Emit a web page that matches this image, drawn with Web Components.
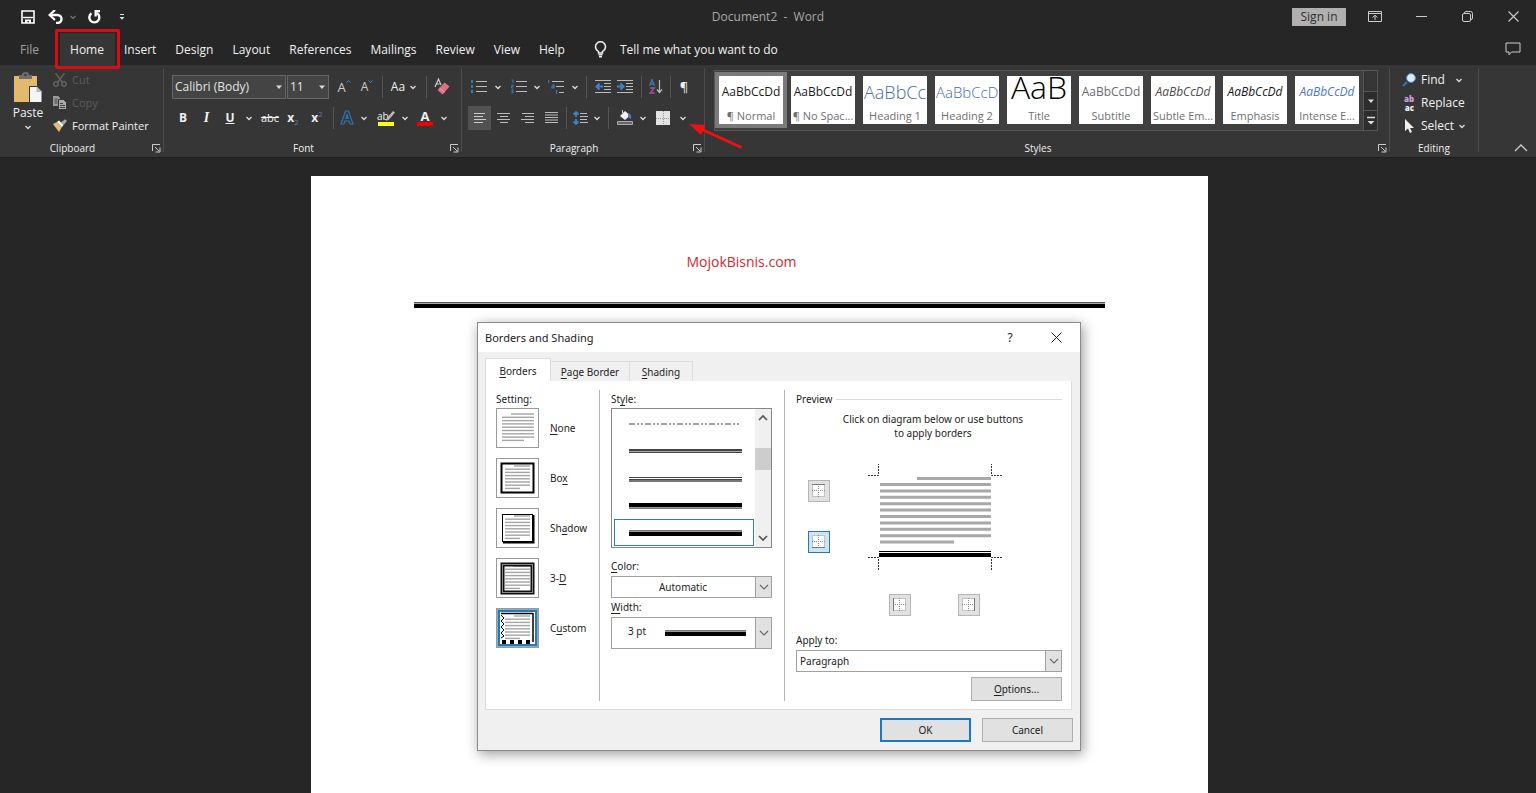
<!DOCTYPE html>
<html lang="en">
<head>
<meta charset="utf-8">
<title>Document2 - Word</title>
<style>
    html, body {
        height: 100%;
    }
    body {
        margin: 0;
        overflow: hidden;
        background: #262626;
        color: #f0f0f0;
        font-family: "Open Sans", "Noto Sans", sans-serif;
        font-size: 12px;
    }
</style>
</head>
<body>
<word-app>
    <title-bar></title-bar>
    <ribbon-tabs></ribbon-tabs>
    <ribbon-bar></ribbon-bar>
    <doc-page></doc-page>
    <borders-dialog></borders-dialog>
    <red-arrow></red-arrow>
</word-app>

<script>
const CHEVRON = '<path d="M1.5 3 4 5.5 6.5 3" fill="none" stroke="#ddd" stroke-width="1.3"/>';

// name: [width, height, markup]
const icons = {
    chevron: [8, 8, CHEVRON],
    dimchevron: [8, 8, '<path d="M1.5 3 4 5.5 6.5 3" fill="none" stroke="#777" stroke-width="1.2"/>'],
    triangle: [8, 8, '<path d="M1 2.5h6L4 6z" fill="#ddd"/>'],
    save: [14, 14, '<path d="M1 1h12v12H1z" fill="none" stroke="#fff" stroke-width="1.6"/><path d="M2 7.5h10" stroke="#fff" stroke-width="1.4"/><path d="M4 13V9.5h6V13H8v-2H6.500v2z" fill="#fff"/>'],
    undo: [16, 14, '<path d="M2.500 5h7a4 4 0 0 1 0 8H8" fill="none" stroke="#fff" stroke-width="2.400"/><path d="M7 0 1.500 5 7 10" fill="none" stroke="#fff" stroke-width="2.200"/>'],
    redo: [14, 14, '<path d="M4.500 3.200A5 5 0 1 0 9.800 3" fill="none" stroke="#fff" stroke-width="2.400"/><path d="M7.500 0H13v2.200H9.800V6.500H7.500z" fill="#fff"/>'],
    custom: [6, 8, '<path d="M1 1.500h4" stroke="#ddd"/><path d="M.5 4h5L3 6.800z" fill="#ddd"/>'],
    more: [10, 10, '<path d="M1 1.500h8" stroke="#ddd" stroke-width="1.500"/><path d="M1.500 5h7L5 8.500z" fill="#ddd"/>'],
    display: [14, 11, '<path d="M.5.5h13v10H.5zM.5 2.500h13" fill="none" stroke="#ccc"/><path d="M7 9V4.500M4.500 6.500 7 4.300l2.500 2.200" fill="none" stroke="#ccc"/>'],
    minimise: [11, 10, '<path d="M0 4.500h11" stroke="#ccc"/>'],
    restore: [11, 11, '<rect x=".5" y="2.500" width="8" height="8" rx="1.500" fill="none" stroke="#ccc"/><path d="M2.500 2.500v-.5Q2.500.5 4 .5h4.500q2 0 2 2V7q0 1.500-1.500 1.500" fill="none" stroke="#ccc"/>'],
    close: [11, 11, '<path d="m.5.5 10 10m0-10-10 10" stroke="#ccc" stroke-width="1.100"/>'],
    comment: [16, 14, '<path d="M1 1h14v9H6.500L4 12.800V10H1z" fill="none" stroke="#ccc"/>'],
    bulb: [13, 17, '<path d="M4.500 12V10.500Q1.500 8.500 1.500 5.700a5 5 0 0 1 10 0Q11.500 8.500 8.500 10.500V12z" fill="none" stroke="#eee" stroke-width="1.500"/><path d="M4.500 13.800h4M5 15.800h3" stroke="#eee" stroke-width="1.400"/>'],
    paste: [30, 31, '<path d="M1 4h23v26H1z" fill="#e3b96d"/><path d="M6 3h3q0-3 3.500-3T16 3h3v4H6z" fill="#6e6e6e"/><circle cx="12.500" cy="3" r="1.200" fill="#363636"/><path d="M16.500 14.500h7.500l5 5v11H16.500z" fill="#f5f5f5" stroke="#363636"/><path d="M23.500 14.500V20H29z" fill="#bbb"/>'],
    cut: [14, 14, '<g fill="none" stroke="#606060" stroke-width="1.500"><circle cx="3" cy="11" r="2.200"/><circle cx="11" cy="11" r="2.200"/><path d="M2.500 0 9.500 9.500M11.500 0 4.500 9.500"/></g>'],
    copy: [14, 14, '<path d="M0 0h5l2 2v8H0z" fill="#9b9b9b"/><path d="M5.500 3.500h5l3 3v7h-8z" fill="#aaa" stroke="#363636"/><path d="M1.500 3h3m-3 2h3m-3 2h3M7 7.500h3M7 9.500h5M7 11.500h5" stroke="#444"/>'],
    brush: [14, 13, '<path d="M0 5 4 3l5 5-3 5Q3 9 0 5z" fill="#e8b878"/><path d="m4 3 2-1.500L10.500 6 9 8z" fill="#fff"/><path d="m8 3.500 4-3.300L14 2l-3.500 4z" fill="#aaa"/>'],
    launcher: [9, 9, '<path d="M.5 7V.5H8" fill="none" stroke="#ccc"/><path d="m3 3 4 4M8 3.500v4.500H3.500" fill="none" stroke="#ccc"/>'],
    eraser: [16, 17, '<path d="m1 9 3.500-8L7 7M2.500 6h3" fill="none" stroke="#ccc" stroke-width="1.200"/><path d="m3.500 12 7-7.500 5 4-7 8z" fill="#e0707f"/><path d="m5.500 10 5 4.500" stroke="#f5a3ad"/>'],
    outlineA: [14, 15, '<path d="M1 14 5.500 1h3L13 14h-3l-1-3H5l-1 3zM5.800 8.500h2.400L7 4.500z" fill="none" stroke="#3273b5" stroke-width="1.200"/>'],
    pen: [9, 11, '<path d="M0 11 1 8 7 1l2 1.500L3 9.500z" fill="#bbb"/>'],
    bullets: [16, 14, '<path d="M5 1.500h11M5 6.500h11M5 11.500h11" stroke="#bbb"/><path d="M0 0h2v3H0zM0 5h2v3H0zM0 10h2v3H0z" fill="#3b78b8"/>'],
    numbers: [16, 15, '<path d="M5 2.500h11M5 7.500h11M5 12.500h11" stroke="#bbb"/><path d="M.5 1H2v3M.3 6H2v1.500H.5V9H2.300M.3 11H2v3H.3M.5 12.500H2" fill="none" stroke="#3b78b8"/>'],
    multi: [16, 14, '<path d="M4 1.500h12M8 6.500h8M11 12.500h5" stroke="#bbb"/><path d="M.5 0v3M4 5h2v3H4V6.500h2M8.500 10v4" fill="none" stroke="#3b78b8" stroke-width="1.200"/>'],
    outdent: [16, 13, '<path d="M0 .5h16M9 3.500h7M9 6.500h7M9 9.500h7M0 12.500h16" stroke="#bbb"/><path d="M8 6.500H2M4.500 3.500l-3 3 3 3" fill="none" stroke="#3b84cc" stroke-width="2"/>'],
    indent: [16, 13, '<path d="M0 .5h16M9 3.500h7M9 6.500h7M9 9.500h7M0 12.500h16" stroke="#bbb"/><path d="M0 6.500h6M3.500 3.500l3 3-3 3" fill="none" stroke="#3b84cc" stroke-width="2"/>'],
    sort: [14, 15, '<path d="m.5 7 2.500-6.500L5.500 7M1.500 5h3" fill="none" stroke="#3b78b8" stroke-width="1.300"/><path d="M1 9h4.300L1 14h4.600" fill="none" stroke="#9a55a0" stroke-width="1.300"/><path d="M10.500 1v12M8 10.500l2.500 3 2.500-3" fill="none" stroke="#bbb" stroke-width="1.200"/>'],
    left: [12, 10, '<path d="M0 .5h11M0 3.500h9M0 6.500h12M0 9.500h9" stroke="#ccc"/>'],
    center: [13, 10, '<path d="M0 .5h13M3 3.500h8M0 6.500h13M3 9.500h8" stroke="#bbb"/>'],
    right: [13, 10, '<path d="M1 .5h12M4 3.500h9M0 6.500h13M4 9.500h9" stroke="#bbb"/>'],
    justify: [13, 11, '<path d="M0 .5h13M0 3h13M0 5.500h13M0 8h13M0 10.500h13" stroke="#bbb"/>'],
    spacing: [15, 14, '<path d="M7 2.500h7M7 5.500h8M7 8.500h7M7 11.500h8" stroke="#bbb"/><path d="M3 1v5M3 8v5M.5 3.500 3 1l2.500 2.500M.5 10.500 3 13l2.500-2.500" fill="none" stroke="#3b84cc" stroke-width="1.800"/>'],
    shade: [17, 15, '<path d="m3 6 5-5 5 4.500L8 10z" fill="#f2f2f2"/><path d="M11 3q4 1 3 6l-3-2z" fill="#3b84cc"/><path d="M5.500 3V0" stroke="#ccc"/><path d="M.5 11.500h15v3H.5z" fill="#666" stroke="#aaa"/>'],
    borders: [14, 14, '<path d="M0 0h14v14H0z" fill="#e3e3e3"/><path d="M7.500 0v14M0 7.500h14" stroke="#999" stroke-dasharray="1 1"/>'],
    find: [15, 14, '<path d="m1 13 4-4" stroke="#2f6fae" stroke-width="2.400"/><circle cx="9" cy="5" r="4.400" fill="#d8ebfb" stroke="#4a90d0"/>'],
    select: [10, 14, '<path d="M1 0v12l3-2.500L6 14l2-1-2-4h4z" fill="#f0f0f0"/>'],
    collapse: [14, 8, '<path d="m1 7 6-6 6 6" fill="none" stroke="#ccc" stroke-width="1.300"/>'],
    down: [10, 10, '<path d="m1 3 4 4 4-4" fill="none" stroke="#666" stroke-width="1.100"/>'],
    scrollup: [10, 8, '<path d="m1 6 4-4 4 4" fill="none" stroke="#555" stroke-width="1.700"/>'],
    scrolldown: [10, 8, '<path d="m1 2 4 4 4-4" fill="none" stroke="#555" stroke-width="1.700"/>'],
    darkclose: [11, 11, '<path d="m.5.5 10 10m0-10-10 10" stroke="#222"/>']
};

class WordIcon extends HTMLElement {
    constructor() {
        super();
        this.attachShadow({mode: "open"});
    }
    connectedCallback() {
        const [w, h, body] = icons[this.getAttribute("name")];
        this.shadowRoot.innerHTML = `
        <style>
            :host { display: inline-flex; flex: none; }
            svg { display: block; }
        </style>
        <svg width="${w}" height="${h}" viewBox="0 0 ${w} ${h}" aria-hidden="true">${body}</svg>
        `;
    }
}

class WordApp extends HTMLElement {
    constructor() {
        super();
        this.attachShadow({mode: "open"});
        this.shadowRoot.innerHTML = `
        <style>
            :host {
                position: relative;
                display: flex;
                flex-direction: column;
                height: 100vh;
                overflow: hidden;
            }
        </style>
        <slot></slot>
        `;
    }
}

class TitleBar extends HTMLElement {
    constructor() {
        super();
        this.attachShadow({mode: "open"});
        this.shadowRoot.innerHTML = `
        <style>
            :host {
                display: grid;
                grid-template-columns: 1fr auto 1fr;
                align-items: center;
                height: 33px;
                flex: none;
                color: #a8a8a8;
            }
            button {
                display: flex;
                align-items: center;
                justify-content: center;
                height: 32px;
                padding: 0;
                border: 0;
                background: none;
                font: inherit;
            }
            .quick, .window {
                display: flex;
                align-items: center;
            }
            .quick {
                padding-left: 12px;
            }
            .quick button { width: 32px; }
            .quick .narrow { width: 10px; }
            .quick .last { width: 24px; }
            .window { justify-content: flex-end; }
            .window button { width: 46px; }
            .window .sign {
                width: 54px;
                height: 18px;
                margin-right: 6px;
                background: #b0b0b0;
                color: #303030;
            }
        </style>
        <div class="quick">
            <button aria-label="Save"><word-icon name="save"></word-icon></button>
            <button class="last" aria-label="Undo"><word-icon name="undo"></word-icon></button>
            <button class="narrow" aria-label="Undo list"><word-icon name="dimchevron"></word-icon></button>
            <button aria-label="Repeat"><word-icon name="redo"></word-icon></button>
            <button class="last" aria-label="Customize"><word-icon name="custom"></word-icon></button>
        </div>
        <span>Document2&nbsp; -&nbsp; Word</span>
        <div class="window">
            <button class="sign">Sign in</button>
            <button aria-label="Ribbon display"><word-icon name="display"></word-icon></button>
            <button aria-label="Minimize"><word-icon name="minimise"></word-icon></button>
            <button aria-label="Restore"><word-icon name="restore"></word-icon></button>
            <button aria-label="Close"><word-icon name="close"></word-icon></button>
        </div>
        `;
    }
}

class RibbonTabs extends HTMLElement {
    constructor() {
        super();
        this.attachShadow({mode: "open"});
        const tabs = ["Insert", "Design", "Layout", "References", "Mailings", "Review", "View", "Help"];
        this.shadowRoot.innerHTML = `
        <style>
            :host {
                display: flex;
                align-items: stretch;
                height: 32px;
                flex: none;
            }
            button {
                padding: 0 10px 0 9px;
                border: 0;
                background: none;
                color: inherit;
                font: inherit;
            }
            .file {
                width: 60px;
                color: #a0a0a0;
            }
            .home {
                position: relative;
                width: 55px;
                background: #363636;
            }
            /* marker drawn over the active tab */
            .home::after {
                content: "";
                position: absolute;
                inset: -4px -5px;
                border: 3px solid #dc0d12;
                border-radius: 2px;
            }
            .tell {
                display: flex;
                align-items: center;
                gap: 13px;
                padding-left: 19px;
            }
            .comment {
                display: flex;
                align-items: center;
                margin-left: auto;
                padding: 0 15px 0 0;
            }
        </style>
        <button class="file">File</button>
        <button class="home">Home</button>
        ${tabs.map(t => `<button>${t}</button>`).join("")}
        <button class="tell"><word-icon name="bulb"></word-icon>Tell me what you want to do</button>
        <button class="comment" aria-label="Comments"><word-icon name="comment"></word-icon></button>
        `;
    }
}

class RibbonGroup extends HTMLElement {
    constructor() {
        super();
        this.attachShadow({mode: "open"});
    }
    connectedCallback() {
        const launcher = this.hasAttribute("launcher");
        this.shadowRoot.innerHTML = `
        <style>
            :host {
                display: grid;
                grid-template-columns: 1fr 1px;
                flex: none;
            }
            .body {
                display: grid;
                grid-template-rows: 74px 18px;
                min-width: 0;
            }
            .line {
                margin: 3px 0 5px;
                background: #4c4c4c;
            }
            .caption {
                display: flex;
                align-items: center;
                font-size: 10px;
                line-height: 16px;
            }
            .caption span {
                flex: 1;
                text-align: center;
            }
            button {
                width: 18px;
                padding: 0 0 0 5px;
                border: 0;
                background: none;
                line-height: 0;
            }
        </style>
        <div class="body">
            <slot></slot>
            <div class="caption">
                <span>${this.getAttribute("caption")}</span>
                ${launcher ? '<button aria-label="More options"><word-icon name="launcher"></word-icon></button>' : ""}
            </div>
        </div>
        <div class="line"></div>
        `;
    }
}

class StyleGallery extends HTMLElement {
    constructor() {
        super();
        this.attachShadow({mode: "open"});
        const styles = [
            ["AaBbCcDd", "¶ Normal", "on"],
            ["AaBbCcDd", "¶ No Spac...", ""],
            ["AaBbCc", "Heading 1", "h1"],
            ["AaBbCcD", "Heading 2", "h2"],
            ["AaB", "Title", "title"],
            ["AaBbCcDd", "Subtitle", "sub"],
            ["AaBbCcDd", "Subtle Em...", "em soft"],
            ["AaBbCcDd", "Emphasis", "em"],
            ["AaBbCcDd", "Intense E...", "em blue"]
        ];
        this.shadowRoot.innerHTML = `
        <style>
            :host {
                display: flex;
                height: 59px;
                margin: 5px 11px 0 9px;
                border: 1px solid #555;
                background: #404040;
            }
            .tile {
                flex: 1;
                min-width: 0;
                height: 56px;
                margin-top: 1px;
                padding: 4px;
                border: 0;
                background: none;
                font: inherit;
                font-size: 11px;
            }
            .tile.on { background: #7a7a7a; }
            .card {
                display: grid;
                grid-template-rows: 32px 16px;
                background: #fff;
                color: #707070;
                line-height: 16px;
                white-space: nowrap;
                overflow: hidden;
            }
            .sample {
                display: flex;
                align-items: center;
                justify-content: center;
                margin: 0 1px;
                overflow: hidden;
                color: #1a1a1a;
                font-size: 12px;
            }
            .h1 .sample {
                justify-content: flex-start;
                color: #466aa5;
                font-size: 18px;
                font-weight: 300;
            }
            .h2 .sample {
                justify-content: flex-start;
                color: #466aa5;
                font-size: 15px;
                font-weight: 300;
            }
            .title .sample {
                align-items: flex-end;
                padding-bottom: 5px;
                color: #000;
                font-size: 32px;
                font-weight: 300;
                line-height: 32px;
            }
            .sub .sample { color: #6c6c6c; }
            .em .sample { font-style: italic; }
            .soft .sample { color: #4c4c4c; }
            .blue .sample { color: #4a7ac0; }
            .label { text-align: center; }
            .scroll {
                display: grid;
                grid-template-rows: repeat(3, 1fr);
                width: 14px;
            }
            .scroll button {
                display: flex;
                align-items: center;
                justify-content: center;
                padding: 0;
                border: 0;
                border-left: 1px solid #555;
                background: #2d2d2d;
            }
            .scroll button + button { border-top: 1px solid #555; }
            .scroll .off { background: #363636; }
        </style>
        ${styles.map(([sample, label, cls]) => `
        <button class="tile ${cls}">
            <span class="card"><span class="sample">${sample}</span><span class="label">${label}</span></span>
        </button>`).join("")}
        <div class="scroll">
            <button class="off" aria-label="Scroll up"></button>
            <button aria-label="Scroll down"><word-icon name="triangle"></word-icon></button>
            <button aria-label="All styles"><word-icon name="more"></word-icon></button>
        </div>
        `;
    }
}

class RibbonBar extends HTMLElement {
    constructor() {
        super();
        this.attachShadow({mode: "open"});
        this.shadowRoot.innerHTML = `
        <style>
            :host {
                display: flex;
                flex: none;
                background: #363636;
                border-bottom: 1px solid #1e1e1e;
            }
            button {
                display: flex;
                align-items: center;
                justify-content: center;
                padding: 0;
                border: 0;
                background: none;
                color: inherit;
                font: inherit;
                line-height: 16px;
                white-space: nowrap;
            }
            i.sep {
                width: 1px;
                height: 22px;
                justify-self: center;
                background: #555;
            }
            .clipboard { width: 164px; }
            .font { width: 298px; }
            .para { width: 243px; }
            .styles { flex: 1; min-width: 0; }
            .editing { width: 89px; }
            .rest {
                display: flex;
                align-items: flex-end;
                justify-content: flex-end;
                width: 57px;
                padding: 0 8px 5px 0;
                box-sizing: border-box;
            }
            .clip {
                display: flex;
                padding: 3px 0 0 4px;
            }
            .paste {
                flex-direction: column;
                justify-content: flex-start;
                gap: 2px;
                width: 48px;
                padding-top: 4px;
            }
            .stack {
                display: grid;
                grid-auto-rows: 23px;
                justify-items: start;
            }
            .stack button { gap: 4px; }
            .clip .stack button { font-size: 11px; }
            .stack word-icon, .stack .swap {
                width: 16px;
                justify-content: center;
            }
            .stack .drop {
                width: 8px;
            }
            .off { color: #5c5c5c; }
            .find {
                padding: 3px 0 0 11px;
            }
            .find button:first-child .drop { margin-left: 6px; }
            .swap {
                display: grid;
                font-size: 8px;
                font-weight: bold;
                line-height: 9px;
                text-align: left;
            }
            .swap b:first-child { color: #c9a0dc; }
            .swap b:last-child { text-align: right; }
            .tools {
                display: grid;
                grid-template-rows: 31px 31px;
                padding-top: 6px;
            }
            .row {
                display: grid;
                align-items: center;
            }
            .row > button { height: 24px; }
            .font .tools { padding-left: 8px; }
            .para .tools { padding-left: 6px; }
            .f1 { grid-template-columns: 115px 43px 28px 18px 12px 32px 12px 20px; }
            .f2 { grid-template-columns: 22px 25px 22px 16px 26px 20px 28px 4px 23px 12px 30px 10px 30px 8px; }
            .p1 { grid-template-columns: 22px 16px 26px 10px 28px 10px 12px 21px 24px 8px 22px 6px 22px; }
            .p2 { grid-template-columns: 23px 25px 23px 24px 6px 23px 10px 12px 23px 12px 28px 12px; }
            .combo {
                display: grid;
                align-items: center;
                margin-right: 1px;
            }
            .combo > * { grid-area: 1 / 1; }
            .combo word-icon {
                justify-self: end;
                margin-right: 3px;
                pointer-events: none;
            }
            select {
                appearance: none;
                width: 100%;
                height: 24px;
                padding: 0 2px;
                border: 1px solid #666;
                border-radius: 0;
                background: #444;
                color: #e4e4e4;
                font: inherit;
            }
            .size { color: #ccc; }
            .size svg {
                flex: none;
                margin-bottom: 10px;
            }
            .gap { gap: 4px; }
            .big { font-size: 13px; }
            .serif { font-family: "Liberation Serif", serif; font-size: 14px; }
            .strike { text-decoration: line-through; font-size: 11px; }
            sub, sup { color: #3b84cc; font-size: 8px; line-height: 8px; }
            sub { margin-top: 8px; }
            sup { margin-bottom: 8px; }
            .on { background: #525252; }
            .bar {
                display: grid;
                justify-items: center;
                grid-template-rows: 12px 4px;
                width: 16px;
                line-height: 12px;
            }
            .bar::after {
                content: "";
                width: 16px;
                height: 4px;
                background: var(--ink);
            }
            .ab {
                --ink: #ffff00;
                font-size: 10px;
            }
            .ab span {
                display: flex;
            }
            .ab word-icon { margin-left: -3px; }
            .ink { --ink: #f00000; font-size: 13px; }
        </style>

        <ribbon-group class="clipboard" caption="Clipboard" launcher>
            <div class="clip">
                <button class="paste"><word-icon name="paste"></word-icon>Paste<word-icon name="chevron"></word-icon></button>
                <div class="stack">
                    <button class="off" disabled><word-icon name="cut"></word-icon>Cut</button>
                    <button class="off" disabled><word-icon name="copy"></word-icon>Copy</button>
                    <button><word-icon name="brush"></word-icon>Format Painter</button>
                </div>
            </div>
        </ribbon-group>

        <ribbon-group class="font" caption="Font" launcher>
            <div class="tools">
                <div class="row f1">
                    <div class="combo"><select aria-label="Font"><option>Calibri (Body)</option></select><word-icon name="triangle"></word-icon></div>
                    <div class="combo"><select aria-label="Font size"><option>11</option></select><word-icon name="triangle"></word-icon></div>
                    <button class="size big" aria-label="Grow font">A<svg width="5" height="5"><path d="M.5 3.500l2-2 2 2" fill="none" stroke="#3b84cc"/></svg></button>
                    <button class="size" aria-label="Shrink font">A<svg width="5" height="5"><path d="M.5 1.500l2 2 2-2" fill="none" stroke="#3b84cc"/></svg></button>
                    <i class="sep"></i>
                    <button class="gap">Aa<word-icon name="chevron"></word-icon></button>
                    <i class="sep"></i>
                    <button aria-label="Clear formatting"><word-icon name="eraser"></word-icon></button>
                </div>
                <div class="row f2">
                    <button><b>B</b></button>
                    <button class="serif"><b><em>I</em></b></button>
                    <button><b><u>U</u></b></button>
                    <button aria-label="Underline styles"><word-icon name="chevron"></word-icon></button>
                    <button class="strike">abc</button>
                    <button><b>x</b><sub>2</sub></button>
                    <button><b>x</b><sup>2</sup></button>
                    <i class="sep"></i>
                    <button aria-label="Text effects"><word-icon name="outlineA"></word-icon></button>
                    <button aria-label="Effects list"><word-icon name="chevron"></word-icon></button>
                    <button><span class="bar ab"><span>ab<word-icon name="pen"></word-icon></span></span></button>
                    <button aria-label="Highlight list"><word-icon name="chevron"></word-icon></button>
                    <button><span class="bar ink"><b>A</b></span></button>
                    <button aria-label="Colour list"><word-icon name="chevron"></word-icon></button>
                </div>
            </div>
        </ribbon-group>

        <ribbon-group class="para" caption="Paragraph" launcher>
            <div class="tools">
                <div class="row p1">
                    <button aria-label="Bullets"><word-icon name="bullets"></word-icon></button>
                    <button aria-label="Bullet list"><word-icon name="chevron"></word-icon></button>
                    <button aria-label="Numbering"><word-icon name="numbers"></word-icon></button>
                    <button aria-label="Numbering list"><word-icon name="chevron"></word-icon></button>
                    <button aria-label="Multilevel"><word-icon name="multi"></word-icon></button>
                    <button aria-label="Multilevel list"><word-icon name="chevron"></word-icon></button>
                    <i class="sep"></i>
                    <button aria-label="Decrease indent"><word-icon name="outdent"></word-icon></button>
                    <button aria-label="Increase indent"><word-icon name="indent"></word-icon></button>
                    <i class="sep"></i>
                    <button aria-label="Sort"><word-icon name="sort"></word-icon></button>
                    <i class="sep"></i>
                    <button class="big">¶</button>
                </div>
                <div class="row p2">
                    <button class="on" aria-label="Align left"><word-icon name="left"></word-icon></button>
                    <button aria-label="Center"><word-icon name="center"></word-icon></button>
                    <button aria-label="Align right"><word-icon name="right"></word-icon></button>
                    <button aria-label="Justify"><word-icon name="justify"></word-icon></button>
                    <i class="sep"></i>
                    <button aria-label="Line spacing"><word-icon name="spacing"></word-icon></button>
                    <button aria-label="Spacing list"><word-icon name="chevron"></word-icon></button>
                    <i class="sep"></i>
                    <button aria-label="Shading"><word-icon name="shade"></word-icon></button>
                    <button aria-label="Shading list"><word-icon name="chevron"></word-icon></button>
                    <button aria-label="Borders"><word-icon name="borders"></word-icon></button>
                    <button aria-label="Borders list"><word-icon name="chevron"></word-icon></button>
                </div>
            </div>
        </ribbon-group>

        <ribbon-group class="styles" caption="Styles" launcher>
            <style-gallery></style-gallery>
        </ribbon-group>

        <ribbon-group class="editing" caption="Editing">
            <div class="stack find">
                <button><word-icon name="find"></word-icon>Find<word-icon class="drop" name="chevron"></word-icon></button>
                <button><span class="swap"><b>ab</b><b>ac</b></span>Replace</button>
                <button><word-icon name="select"></word-icon>Select<word-icon class="drop" name="chevron"></word-icon></button>
            </div>
        </ribbon-group>
        <div class="rest">
            <button aria-label="Collapse ribbon"><word-icon name="collapse"></word-icon></button>
        </div>
        `;
    }
}

class DocPage extends HTMLElement {
    constructor() {
        super();
        this.attachShadow({mode: "open"});
        this.shadowRoot.innerHTML = `
        <style>
            :host {
                display: flex;
                flex: 1;
                justify-content: center;
                padding: 18px 17px 0 0;
            }
            article {
                box-sizing: border-box;
                width: 59%;
                padding: 74px 103px 0;
                background: #fff;
            }
            p {
                margin: 0;
                padding-right: 36px;
                color: #d02a2c;
                font-size: 14px;
                line-height: 24px;
                text-align: center;
            }
            hr {
                height: 1px;
                margin: 28px 0 0;
                border: 0;
                border-top: 1px solid #555;
                border-bottom: 4px solid #000;
                background: #aaa;
            }
        </style>
        <article>
            <p>MojokBisnis.com</p>
            <hr>
        </article>
        `;
    }
}

// label + select with the dialog's grey drop button
class PickList extends HTMLElement {
    constructor() {
        super();
        this.attachShadow({mode: "open"});
    }
    connectedCallback() {
        this.shadowRoot.innerHTML = `
        <style>
            :host {
                display: block;
                --h: 22px;
            }
            :host([tall]) { --h: 32px; }
            label {
                display: block;
                line-height: 19px;
            }
            .box {
                display: grid;
                align-items: center;
            }
            .box > * { grid-area: 1 / 1; }
            select {
                appearance: none;
                box-sizing: border-box;
                width: 100%;
                height: var(--h);
                padding: 0 20px 0 3px;
                border: 1px solid #a0a0a0;
                border-radius: 0;
                background: #fff;
                color: #222;
                font: inherit;
            }
            :host([center]) select { text-align-last: center; }
            :host([tall]) select { padding: 0 0 4px 16px; }
            .drop {
                display: flex;
                align-items: center;
                justify-content: center;
                justify-self: end;
                box-sizing: border-box;
                width: 17px;
                height: var(--h);
                border: 1px solid #a0a0a0;
                background: #e1e1e1;
                pointer-events: none;
            }
            ::slotted(.line) {
                grid-area: 1 / 1;
                margin: 0 26px 0 54px;
                pointer-events: none;
            }
        </style>
        <label for="pick"><slot name="label"></slot></label>
        <div class="box">
            <select id="pick"><option>${this.getAttribute("value")}</option></select>
            <slot></slot>
            <span class="drop"><word-icon name="down"></word-icon></span>
        </div>
        `;
    }
}

// thumbnail and label of one border setting
class SettingChoice extends HTMLElement {
    constructor() {
        super();
        this.attachShadow({mode: "open"});
    }
    connectedCallback() {
        const kind = this.getAttribute("kind");
        const small = kind !== "none";
        const [x, top, right, rows, step] = small ? [9, 8, 34, 7, 3.2] : [6, 6, 38, 8, 3.3];
        let text = `<path d="M${x + 9} ${top}H${right}" stroke="#a4a4a4" stroke-width="1.4"/>`;
        for (let i = 1; i <= rows; i++) {
            text += `<path d="M${x} ${top + i * step}H${i === rows ? right - 10 : right}" stroke="#a4a4a4" stroke-width="1.4"/>`;
        }
        const frames = {
            none: "",
            box: '<rect x="5.500" y="5.500" width="32" height="29" fill="none" stroke="#000" stroke-width="2"/>',
            shadow: '<rect x="6.500" y="6.500" width="30" height="27" fill="none" stroke="#000"/><path d="M37.500 7v28.500M7 34.500h31.500" stroke="#000" stroke-width="2"/>',
            "3d": '<rect x="6.500" y="6.500" width="30" height="28" fill="none" stroke="#111" stroke-width="4"/><rect x="6.500" y="6.500" width="30" height="28" fill="none" stroke="#888"/>',
            custom: `<rect x="2.500" y="2.500" width="38" height="35" fill="#fff" stroke="#2879b0" stroke-width="3"/>
                <rect x="1.500" y="1.500" width="40" height="37" fill="none" stroke="#d0e8f8" stroke-dasharray="1 1"/>
                <path d="M5 5.500h32M37 5v29" stroke="#000" stroke-width="1.500"/>
                <path d="m5 7 3 3-3 3 3 3-3 3 3 3-3 3 3 3-3 2" fill="none" stroke="#000"/>
                <path d="M6 34h32" stroke="#000" stroke-width="4" stroke-dasharray="4 4"/>`
        };
        this.shadowRoot.innerHTML = `
        <style>
            :host { display: block; }
            label {
                display: flex;
                align-items: center;
                gap: 11px;
            }
            .thumb {
                display: grid;
                flex: none;
            }
            .thumb > * { grid-area: 1 / 1; }
            input {
                appearance: none;
                box-sizing: border-box;
                width: 43px;
                height: 40px;
                margin: 0;
                border: 1px solid #999;
                background: #fff;
            }
            svg { pointer-events: none; }
        </style>
        <label>
            <span class="thumb">
                <input type="radio" name="setting" ${kind === "custom" ? "checked" : ""}>
                <svg width="43" height="40">${kind === "custom" ? frames.custom + text : text + frames[kind]}</svg>
            </span>
            <span><slot></slot></span>
        </label>
        `;
    }
}

class BorderPreview extends HTMLElement {
    constructor() {
        super();
        this.attachShadow({mode: "open"});
        let lines = '<path d="M49 14.500h74" stroke="#a8a8a8" stroke-width="3"/>';
        for (let i = 0; i < 10; i++) {
            const y = 20.5 + i * 6.4;
            lines += `<path d="M12 ${y}h${i === 9 ? 74 : 111}" stroke="#a8a8a8" stroke-width="3"/>`;
        }
        const button = (edge, label, on) => `
            <button class="${edge} ${on}" aria-label="${label}">
                <svg width="16" height="16">
                    <path d="M1 1h13v13H1z" fill="#fff"/>
                    <path d="M1.500 1.500h12v12h-12zM7.500 1v13M1 7.500h13" fill="none" stroke="#888" stroke-dasharray="1 1"/>
                    <path d="${{top: "M1 1.500h13", bottom: "M1 13.500h13", left: "M1.500 1v13", right: "M13.500 1v13"}[edge]}" stroke="#777"/>
                </svg>
            </button>`;
        this.shadowRoot.innerHTML = `
        <style>
            :host {
                display: grid;
                grid-template-columns: 22px 134px;
                grid-template-rows: 106px auto;
                column-gap: 38px;
                row-gap: 24px;
                margin: 24px 0 0 12px;
            }
            .side {
                display: grid;
                align-content: start;
                gap: 29px;
                padding-top: 16px;
            }
            .foot {
                grid-column: 2;
                display: flex;
                gap: 47px;
                padding-left: 21px;
            }
            button {
                display: flex;
                align-items: center;
                justify-content: center;
                box-sizing: border-box;
                width: 22px;
                height: 22px;
                padding: 0;
                border: 1px solid #b5b5b5;
                background: #e1e1e1;
            }
            .on {
                border-color: #2a78b0;
                background: #cce4f7;
            }
        </style>
        <div class="side">${button("top", "Top border", "")}${button("bottom", "Bottom border", "on")}</div>
        <svg width="134" height="106" viewBox="0 0 134 106">
            ${lines}
            <path d="M11 87.500h112" stroke="#000"/>
            <path d="M11 91h112" stroke="#000" stroke-width="4"/>
            <path d="M0 11.500h10.500V0M134 11.500h-10.500V0M0 93.500h10.500V106M134 93.500h-10.500V106" fill="none" stroke="#333" stroke-dasharray="2 1"/>
        </svg>
        <div class="foot">${button("left", "Left border", "")}${button("right", "Right border", "")}</div>
        `;
    }
}

class BordersDialog extends HTMLElement {
    constructor() {
        super();
        this.attachShadow({mode: "open"});
        this.shadowRoot.innerHTML = `
        <style>
            :host {
                position: absolute;
                left: 477px;
                top: 322px;
                box-sizing: border-box;
                width: 604px;
                border: 1px solid #8a8a8a;
                background: #f0f0f0;
                box-shadow: 2px 3px 12px rgba(0, 0, 0, 0.4);
                color: #222;
                font-family: "Noto Sans", "Open Sans", sans-serif;
                font-size: 10px;
            }
            u { text-underline-offset: 2px; }
            header {
                display: flex;
                align-items: center;
                height: 29px;
                padding-left: 7px;
                background: #fff;
                font-size: 11px;
            }
            header button {
                display: flex;
                align-items: center;
                justify-content: center;
                width: 46px;
                height: 28px;
                padding: 0;
                border: 0;
                background: none;
                color: inherit;
                font: inherit;
            }
            header .help {
                margin-left: auto;
                font-size: 12px;
            }
            header button:last-child { margin-right: 1px; }
            nav {
                display: flex;
                align-items: flex-end;
                height: 29px;
                padding-left: 7px;
            }
            nav button {
                width: 79px;
                height: 20px;
                padding: 0;
                border: 1px solid #dcdcdc;
                border-width: 1px 1px 0 0;
                background: #f0f0f0;
                color: inherit;
                font: inherit;
            }
            nav button:first-child {
                width: 66px;
                height: 23px;
                padding-top: 2px;
                border-left-width: 1px;
                background: #fff;
            }
            nav button:last-child { width: 63px; }
            .panel {
                display: grid;
                grid-template-columns: 103px 1px 184px 1px 1fr;
                margin: 0 8px 0 7px;
                padding: 9px 9px 8px 10px;
                border: 1px solid #dcdcdc;
                border-top: 0;
                background: #fff;
            }
            .rule { background: #b4b4b4; }
            h3 {
                margin: 0;
                font: inherit;
                line-height: 18px;
            }
            .choices {
                display: grid;
                gap: 10px;
            }
            .mid {
                padding: 0 12px 0 11px;
            }
            .list {
                display: flex;
                justify-content: space-between;
                box-sizing: border-box;
                height: 140px;
                margin-bottom: 9px;
                border: 1px solid #888;
            }
            .items {
                display: grid;
                grid-template-rows: 27px 27px 28px 27px 27px;
                width: 140px;
                padding: 1px 0 0 2px;
            }
            .item {
                display: grid;
                align-content: center;
                padding: 0 11px 0 14px;
                border: 1px solid transparent;
            }
            .item.on { border-color: #2f7fa8; }
            .bar {
                display: flex;
                flex-direction: column;
                justify-content: space-between;
                align-items: center;
                width: 16px;
                padding: 5px 0;
                background: #f0f0f0;
            }
            .thumb {
                width: 16px;
                height: 22px;
                margin-bottom: 38px;
                background: #cdcdcd;
            }
            .line { display: block; }
            .thin { height: 1px; border: solid #444; border-width: 2px 0 1px; background: #aaa; }
            .triple { height: 1px; border: solid #444; border-width: 1px 0 1px; box-shadow: 0 2px #777; }
            .thick { height: 1px; border: solid #000; border-width: 4px 0 1px; border-bottom-color: #777; background: #999; }
            .under { height: 1px; border: solid #000; border-width: 1px 0 4px; border-top-color: #777; background: #999; }
            .right {
                padding-left: 11px;
            }
            .legend {
                display: flex;
                align-items: center;
                gap: 4px;
            }
            .legend::after {
                content: "";
                flex: 1;
                height: 1px;
                background: #dcdcdc;
            }
            .hint {
                margin: 4px 0 0;
                padding-left: 8px;
                line-height: 14px;
                text-align: center;
            }
            .apply {
                margin-top: 15px;
            }
            .btn {
                box-sizing: border-box;
                width: 91px;
                height: 24px;
                padding: 0;
                border: 1px solid #adadad;
                background: #e1e1e1;
                color: inherit;
                font: inherit;
            }
            .options {
                display: block;
                margin: 5px 0 0 auto;
            }
            footer {
                display: flex;
                justify-content: flex-end;
                gap: 11px;
                padding: 8px 7px;
            }
            .ok { border: 2px solid #1a78c2; }
        </style>
        <header>
            Borders and Shading
            <button class="help" aria-label="Help">?</button>
            <button aria-label="Close"><word-icon name="darkclose"></word-icon></button>
        </header>
        <nav>
            <button><u>B</u>orders</button>
            <button><u>P</u>age Border</button>
            <button><u>S</u>hading</button>
        </nav>
        <div class="panel">
            <section>
                <h3>Setting:</h3>
                <div class="choices">
                    <setting-choice kind="none"><u>N</u>one</setting-choice>
                    <setting-choice kind="box">Bo<u>x</u></setting-choice>
                    <setting-choice kind="shadow">Sh<u>a</u>dow</setting-choice>
                    <setting-choice kind="3d">3-<u>D</u></setting-choice>
                    <setting-choice kind="custom">C<u>u</u>stom</setting-choice>
                </div>
            </section>
            <div class="rule"></div>
            <section class="mid">
                <h3 id="style">St<u>y</u>le:</h3>
                <div class="list">
                    <div class="items" role="listbox" aria-labelledby="style">
                        <div class="item" role="option"><svg width="112" height="2"><path d="M0 1h112" stroke="#444" stroke-dasharray="6 2 2 2 2 2"/></svg></div>
                        <div class="item" role="option"><i class="line thin"></i></div>
                        <div class="item" role="option"><i class="line triple"></i></div>
                        <div class="item" role="option"><i class="line thick"></i></div>
                        <div class="item on" role="option" aria-selected="true"><i class="line under"></i></div>
                    </div>
                    <div class="bar">
                        <word-icon name="scrollup"></word-icon>
                        <div class="thumb"></div>
                        <word-icon name="scrolldown"></word-icon>
                    </div>
                </div>
                <pick-list value="Automatic" center><span slot="label"><u>C</u>olor:</span></pick-list>
                <pick-list value="3 pt" tall><span slot="label"><u>W</u>idth:</span><i class="line under"></i></pick-list>
            </section>
            <div class="rule"></div>
            <section class="right">
                <h3 class="legend">Preview</h3>
                <p class="hint">Click on diagram below or use buttons<br>to apply borders</p>
                <border-preview></border-preview>
                <pick-list class="apply" value="Paragraph"><span slot="label">App<u>l</u>y to:</span></pick-list>
                <button class="btn options"><u>O</u>ptions...</button>
            </section>
        </div>
        <footer>
            <button class="btn ok">OK</button>
            <button class="btn">Cancel</button>
        </footer>
        `;
    }
}

// pointer towards the Borders drop-down
class RedArrow extends HTMLElement {
    constructor() {
        super();
        this.attachShadow({mode: "open"});
        this.shadowRoot.innerHTML = `
        <style>
            :host {
                position: absolute;
                left: 689px;
                top: 122px;
                pointer-events: none;
            }
            svg { display: block; }
        </style>
        <svg width="54" height="28" viewBox="0 0 54 28">
            <path d="M12 7 51.500 25" stroke="#ee1111" stroke-width="3" stroke-linecap="round"/>
            <path d="M0 2 16.500 3 12 13z" fill="#ee1111"/>
        </svg>
        `;
    }
}

customElements.define("word-icon", WordIcon);
customElements.define("word-app", WordApp);
customElements.define("title-bar", TitleBar);
customElements.define("ribbon-tabs", RibbonTabs);
customElements.define("ribbon-group", RibbonGroup);
customElements.define("style-gallery", StyleGallery);
customElements.define("ribbon-bar", RibbonBar);
customElements.define("doc-page", DocPage);
customElements.define("pick-list", PickList);
customElements.define("setting-choice", SettingChoice);
customElements.define("border-preview", BorderPreview);
customElements.define("borders-dialog", BordersDialog);
customElements.define("red-arrow", RedArrow);
</script>
</body>
</html>
